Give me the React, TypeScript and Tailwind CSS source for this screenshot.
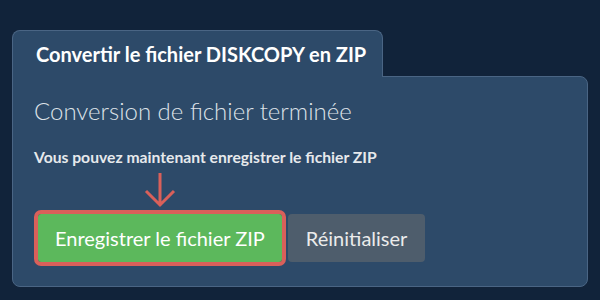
import React from "react";

export default function App() {
  return (
    <div className="w-[600px] h-[300px] bg-[#11233a] overflow-hidden" style={{ fontFamily: "Lato, 'Noto Sans', sans-serif" }}>
      <div className="pt-[30px] pl-[12px] w-[588px]">
        <div className="relative z-10 -mb-px w-[371px] h-[47px] rounded-t-[8px] border border-b-0 border-[#4a6584] bg-[#2d4a69] pl-[23px] pt-[11px]">
          <div className="text-[20px] leading-[24px] font-bold text-white">Convertir le fichier DISKCOPY en ZIP</div>
        </div>
        <div className="w-[576px] h-[211px] rounded-b-[8px] rounded-tr-[8px] border border-[#4a6584] bg-[#2d4a69] pl-[21px] pt-[19px]">
          <div className="text-[24px] leading-[29px] font-light text-[#dde2e8]">Conversion de fichier terminée</div>
          <div className="mt-[22px] text-[15.7px] leading-[20px] font-bold text-[#e6e9ec]">Vous pouvez maintenant enregistrer le fichier ZIP</div>
          <div className="mt-[47px] flex items-center gap-[6px] pl-[4px]">
            <div className="relative">
              <svg className="absolute left-1/2 -translate-x-1/2 -top-[42px]" width="32" height="36" viewBox="0 0 32 36" fill="none">
                <path d="M16 1 V33 M2 19 L16 33 L30 19" stroke="#d9605a" strokeWidth="3" strokeLinecap="butt" />
              </svg>
              <button className="h-[48px] px-[17px] rounded-[3px] bg-[#5cb85c] text-white text-[20px] leading-[24px] outline-[4px] outline-solid outline-[#d9605a] outline-offset-0">
                Enregistrer le fichier ZIP
              </button>
            </div>
            <button className="h-[48px] px-[18px] rounded-[4px] bg-[#4e5d6c] text-[#ebebeb] text-[20px] leading-[24px]">
              Réinitialiser
            </button>
          </div>
        </div>
      </div>
    </div>
  );
}
